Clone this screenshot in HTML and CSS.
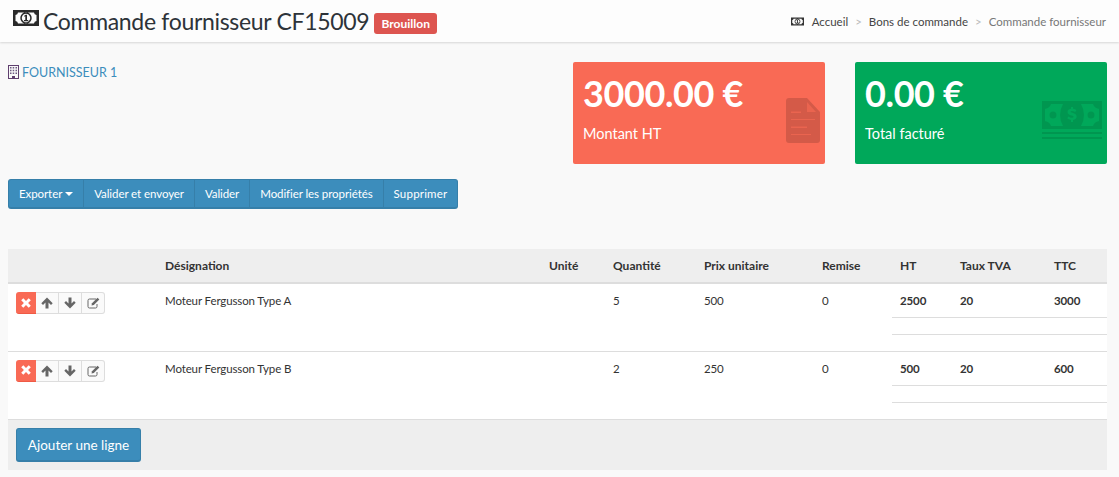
FILE: index.html
```html
<!DOCTYPE html>
<html lang="fr">
<head>
<meta charset="utf-8">
<title>Commande fournisseur CF15009</title>
<link rel="stylesheet" href="styles.css">
</head>
<body>
<svg class="defs" width="0" height="0" aria-hidden="true">
  <symbol id="money" viewBox="0 0 26 16">
    <path fill-rule="evenodd" d="M0 0H26V16H0ZM5 2.500A2.800 2.800 0 0 1 2.500 5V11A2.800 2.800 0 0 1 5 13.500H21A2.800 2.800 0 0 1 23.500 11V5A2.800 2.800 0 0 1 21 2.500ZM13 2.300A5.700 5.700 0 1 0 13.010 2.300ZM13 3.800A4.200 4.200 0 1 1 12.990 3.800Z"/>
    <path d="M12.700 4.800H14V10H15.200V11.200H11V10H12.300V6.300L11.200 6.800V5.800Z"/>
  </symbol>
</svg>

<header class="topbar">
  <h1 class="title">
    <svg class="title-icon"><use href="#money"/></svg>
    <span>Commande fournisseur CF15009</span>
    <span class="badge">Brouillon</span>
  </h1>
  <nav class="crumbs">
    <svg class="crumb-icon"><use href="#money"/></svg>
    <a class="crumb crumb-first">Accueil</a>
    <span class="sep">&gt;</span>
    <a class="crumb">Bons de commande</a>
    <span class="sep">&gt;</span>
    <span class="crumb-current">Commande fournisseur</span>
  </nav>
</header>

<main class="content">
  <section class="summary">
    <div class="supplier">
      <svg class="building" viewBox="0 0 11 14">
        <path fill="#5f3f6e" fill-rule="evenodd" d="M0 0H11V14H0ZM1 1V13H4V11H7V13H10V1Z"/>
        <path fill="#6d5a80" d="M2 2h1.500v1.500H2zM4.700 2h1.500v1.500H4.700zM7.500 2h1.500v1.500H7.500zM2 4.700h1.500v1.500H2zM4.700 4.700h1.500v1.500H4.700zM7.500 4.700h1.500v1.500H7.500zM2 7.400h1.500v1.500H2zM4.700 7.400h1.500v1.500H4.700zM7.500 7.400h1.500v1.500H7.500z"/>
      </svg>
      <a class="supplier-link">FOURNISSEUR 1</a>
    </div>
    <div class="stat stat-red">
      <div class="stat-value">3000.00 €</div>
      <div class="stat-label">Montant HT</div>
      <svg class="stat-icon stat-icon-file" viewBox="0 0 34 45">
        <path d="M3 0H21L34 14V42a3 3 0 0 1-3 3H3a3 3 0 0 1-3-3V3a3 3 0 0 1 3-3Z"/>
        <path class="cut" d="M21 4L30 14H21Z"/>
        <path class="cut" d="M5 13.500h10v1.500H5zM5 21h24v1H5zM5 28.500h16v1.500H5zM5 36h20v1H5z"/>
      </svg>
    </div>
    <div class="stat stat-green">
      <div class="stat-value">0.00 €</div>
      <div class="stat-label">Total facturé</div>
      <svg class="stat-icon stat-icon-cash" viewBox="0 0 60 38">
        <path fill-rule="evenodd" d="M0 0H60V28H0ZM9 3H21Q18 8 18 14Q18 20 21 25H9Q8 21 3 20V8Q8 7 9 3ZM51 3H39Q42 8 42 14Q42 20 39 25H51Q52 21 57 20V8Q52 7 51 3ZM7.500 14a3.500 3.500 0 1 0 7 0a3.500 3.500 0 1 0-7 0ZM45.500 14a3.500 3.500 0 1 0 7 0a3.500 3.500 0 1 0-7 0ZM29 6h2v1.800c1.500.2 2.700.8 3.300 1.400l-1.200 1.800c-.8-.7-1.900-1.100-3-1.100c-1 0-1.500.4-1.500.9c0 1.400 6 .9 6 4.800c0 1.800-1.300 3-3.600 3.300v2h-2v-2c-1.600-.2-2.900-.9-3.700-1.600l1.300-1.800c.8.700 2 1.300 3.200 1.300c1.100 0 1.800-.4 1.800-1.100c0-1.500-6-1-6-4.700c0-1.700 1.300-2.800 3.400-3.200Z"/>
        <path d="M0 31h60v2H0zM0 36h60v2H0z"/>
      </svg>
    </div>
  </section>

  <div class="actions">
    <a class="action">Exporter <i class="caret"></i></a>
    <a class="action">Valider et envoyer</a>
    <a class="action">Valider</a>
    <a class="action">Modifier les propriétés</a>
    <a class="action">Supprimer</a>
  </div>

  <table class="lines">
    <colgroup>
      <col class="c-tools"><col class="c-name"><col class="c-unit"><col class="c-qty"><col class="c-price"><col class="c-disc"><col class="c-ht"><col class="c-tva"><col class="c-ttc">
    </colgroup>
    <thead>
      <tr><th></th><th>Désignation</th><th>Unité</th><th>Quantité</th><th>Prix unitaire</th><th>Remise</th><th>HT</th><th>Taux TVA</th><th>TTC</th></tr>
    </thead>
    <tbody>
      <tr>
        <td class="tools-cell">
          <div class="tools">
            <button class="tool tool-del"><svg viewBox="0 0 10 10"><path d="M2.300.2L5 2.900L7.700.2L9.800 2.300L7.100 5L9.800 7.700L7.700 9.800L5 7.100L2.300 9.800L.2 7.700L2.900 5L.2 2.300Z"/></svg></button>
            <button class="tool"><svg viewBox="0 0 12 12"><path d="M6 .5L11.700 6.200L10 7.900L7.500 5.400V11.500H4.500V5.400L2 7.900L.3 6.200Z"/></svg></button>
            <button class="tool"><svg viewBox="0 0 12 12"><path d="M6 11.500L.3 5.800L2 4.100L4.500 6.600V.5H7.500V6.600L10 4.100L11.700 5.800Z"/></svg></button>
            <button class="tool tool-edit"><svg viewBox="0 0 13 12"><path class="outline" d="M9 2H2.500A1.500 1.500 0 0 0 1 3.500V9.500A1.500 1.500 0 0 0 2.500 11H8.500A1.500 1.500 0 0 0 10 9.500V7"/><path d="M5 6.200L10.500 .7L12.300 2.500L6.800 8L4.500 8.500Z"/></svg></button>
          </div>
        </td>
        <td>Moteur Fergusson Type A</td><td></td><td>5</td><td>500</td><td>0</td>
        <td colspan="3" class="amounts-cell">
          <div class="amounts"><b>2500</b><b>20</b><b>3000</b></div>
          <div class="amount-gap"></div>
        </td>
      </tr>
      <tr>
        <td class="tools-cell">
          <div class="tools">
            <button class="tool tool-del"><svg viewBox="0 0 10 10"><path d="M2.300.2L5 2.900L7.700.2L9.800 2.300L7.100 5L9.800 7.700L7.700 9.800L5 7.100L2.300 9.800L.2 7.700L2.900 5L.2 2.300Z"/></svg></button>
            <button class="tool"><svg viewBox="0 0 12 12"><path d="M6 .5L11.700 6.200L10 7.900L7.500 5.400V11.500H4.500V5.400L2 7.900L.3 6.200Z"/></svg></button>
            <button class="tool"><svg viewBox="0 0 12 12"><path d="M6 11.500L.3 5.800L2 4.100L4.500 6.600V.5H7.500V6.600L10 4.100L11.700 5.800Z"/></svg></button>
            <button class="tool tool-edit"><svg viewBox="0 0 13 12"><path class="outline" d="M9 2H2.500A1.500 1.500 0 0 0 1 3.500V9.500A1.500 1.500 0 0 0 2.500 11H8.500A1.500 1.500 0 0 0 10 9.500V7"/><path d="M5 6.200L10.500 .7L12.300 2.500L6.800 8L4.500 8.500Z"/></svg></button>
          </div>
        </td>
        <td>Moteur Fergusson Type B</td><td></td><td>2</td><td>250</td><td>0</td>
        <td colspan="3" class="amounts-cell">
          <div class="amounts"><b>500</b><b>20</b><b>600</b></div>
          <div class="amount-gap"></div>
        </td>
      </tr>
    </tbody>
  </table>
  <div class="table-foot">
    <a class="add-line">Ajouter une ligne</a>
  </div>
</main>
</body>
</html>
```
FILE: styles.css
```css
* { box-sizing: border-box; }
html, body { margin: 0; padding: 0; }
body {
  width: 1119px;
  height: 477px;
  overflow: hidden;
  background: #f9f9f9;
  color: #333;
  font-family: "Lato", "Noto Sans", sans-serif;
  font-size: 12px;
}
.defs { position: absolute; }

.topbar {
  height: 42px;
  display: flex;
  justify-content: space-between;
  background: #fdfdfd;
  box-shadow: 0 1px 2px rgba(0,0,0,.14);
  padding: 0 13px 0 13px;
}
.title {
  margin: 0;
  display: flex;
  align-items: flex-start;
  font-weight: 400;
  font-size: 23px;
  letter-spacing: -.32px;
  line-height: 42px;
  color: #2d3339;
}
.title-icon { width: 26px; height: 16px; margin: 10px 4px 0 0; fill: #2a2a2a; }
.badge {
  margin: 13px 0 0 5px;
  height: 21px;
  width: 63px;
  border-radius: 3px;
  background: #dd5550;
  color: #fff;
  font-size: 12px;
  letter-spacing: 0;
  font-weight: 700;
  line-height: 21px;
  text-align: center;
}
.crumbs {
  display: flex;
  align-items: center;
  height: 42px;
  font-size: 11.5px;
  color: #444;
}
.crumb-icon { width: 13px; height: 9px; margin-right: 8px; fill: #333; }
.sep { color: #bbb; margin: 0 7px; }
.crumb-current { color: #777; }

.content { padding: 0 12px 0 8px; }
.summary { display: flex; height: 122px; padding-top: 20px; align-items: flex-start; }
.supplier {
  flex: 1;
  display: flex;
  align-items: center;
  gap: 3px;
  height: 20px;
  color: #3c8dbc;
  font-size: 12.5px;
}
.building { width: 11px; height: 14px; }
.stat {
  position: relative;
  width: 252px;
  height: 102px;
  border-radius: 2px;
  padding: 10px;
  color: #fff;
}
.stat-red { background: #f96a55; margin-right: 30px; }
.stat-green { background: #00a85a; }
.stat-value { font-size: 36px; letter-spacing: -.4px; font-weight: 700; line-height: 42px; }
.stat-label { margin-top: 10px; font-size: 14.5px; line-height: 20px; }
.stat-icon { position: absolute; fill: rgba(0,0,0,.15); }
.stat-icon-file { left: 213px; top: 36px; width: 34px; height: 45px; }
.stat-icon-file .cut { fill: #f96a55; opacity: .6; }
.stat-icon-cash { left: 187px; top: 39px; width: 60px; height: 38px; fill: rgba(0,0,0,.1); }

.actions {
  display: inline-flex;
  margin-top: 15px;
  height: 30px;
  background: #3c8dbc;
  border: 1px solid #367fa9;
  border-bottom-width: 2px;
  border-radius: 3px;
  color: #fff;
  vertical-align: top;
}
.action {
  display: flex;
  align-items: center;
  padding: 0 10px;
  border-left: 1px solid #367fa9;
  font-size: 11.5px;
  letter-spacing: -.08px;
}
.action:first-child { border-left: 0; }
.action:last-child { letter-spacing: .2px; }
.caret {
  display: inline-block;
  margin-left: 3px;
  border-top: 4px solid #fff;
  border-left: 4px solid transparent;
  border-right: 4px solid transparent;
}

.lines {
  display: table;
  width: 1099px;
  margin-top: 40px;
  table-layout: fixed;
  border-collapse: collapse;
  background: #fff;
}
.c-tools { width: 149px; } .c-name { width: 384px; } .c-unit { width: 64px; }
.c-qty { width: 91px; } .c-price { width: 118px; } .c-disc { width: 78px; }
.c-ht { width: 60px; } .c-tva { width: 94px; } .c-ttc { width: 61px; }
.lines th {
  height: 34px;
  padding: 0 8px;
  background: #eee;
  border-bottom: 2px solid #ddd;
  text-align: left;
  font-size: 12px;
  font-weight: 700;
  color: #333;
}
.lines td {
  height: 68px;
  padding: 9px 8px 0;
  vertical-align: top;
  border-bottom: 1px solid #ddd;
  font-size: 11.5px;
  letter-spacing: -.12px;
  line-height: 16px;
  color: #333;
}
.lines td.tools-cell { padding: 8px 8px 0; }
.lines td.amounts-cell { padding: 0; }
.amounts {
  display: grid;
  grid-template-columns: 60px 94px 61px;
  height: 34px;
  padding-top: 9px;
  border-bottom: 1px solid #ddd;
}
.amounts b { padding-left: 8px; font-weight: 700; }
.amount-gap { height: 17px; border-bottom: 1px solid #ddd; }

.tools {
  display: flex;
  width: 89px;
  height: 22px;
}
.tool {
  flex: none;
  width: 23px;
  height: 22px;
  padding: 0;
  margin: 0;
  display: flex;
  align-items: center;
  justify-content: center;
  background: #fafafa;
  border: 1px solid #ddd;
  border-left: 0;
  fill: #666;
}
.tool svg { width: 12px; height: 12px; }
.tool-del {
  width: 20px;
  background: #f96a55;
  border: 0;
  border-bottom: 1px solid #ef5a45;
  border-radius: 3px 0 0 3px;
  fill: #fff;
}
.tool-del svg { width: 10px; height: 10px; }
.tool-edit { border-radius: 0 3px 3px 0; }
.tool-edit svg { width: 13px; height: 12px; }
.tool-edit .outline { fill: none; stroke: #666; stroke-width: 1; }

.table-foot {
  height: 50px;
  background: #eee;
  padding: 8px 8px 0;
}
.add-line {
  display: block;
  width: 125px;
  height: 34px;
  background: #3c8dbc;
  border: 1px solid #367fa9;
  border-bottom-width: 2px;
  border-radius: 3px;
  color: #fff;
  font-size: 13.5px;
  line-height: 32px;
  text-align: center;
}
```
